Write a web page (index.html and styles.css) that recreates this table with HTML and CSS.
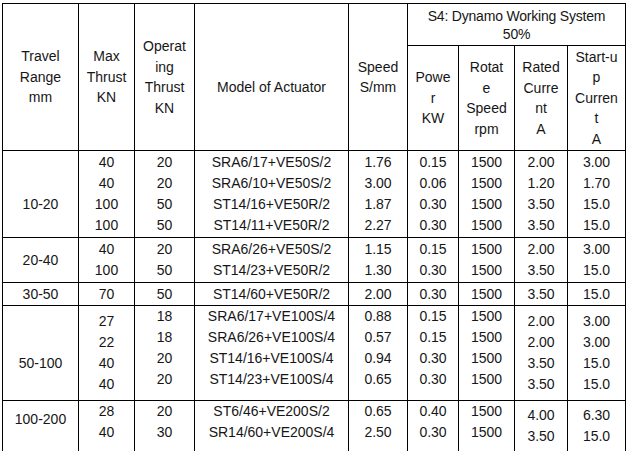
FILE: index.html
```html
<!DOCTYPE html>
<html>
<head>
<meta charset="utf-8">
<link rel="stylesheet" href="styles.css">
</head>
<body>
<table class="spec">
  <colgroup>
    <col class="c-travel"><col class="c-max"><col class="c-op"><col class="c-model"><col class="c-speed">
    <col class="c-power"><col class="c-rot"><col class="c-rated"><col class="c-start">
  </colgroup>
  <tr class="r-head1">
    <td rowspan="2" class="hd">Travel<br>Range<br>mm</td>
    <td rowspan="2" class="hd">Max<br>Thrust<br>KN</td>
    <td rowspan="2" class="hd">Operat<br>ing<br>Thrust<br>KN</td>
    <td rowspan="2" class="hd pre">Model of Actuator</td>
    <td rowspan="2" class="hd">Speed<br>S/mm</td>
    <td colspan="4" class="hd s4">S4: Dynamo Working System<br>50%</td>
  </tr>
  <tr class="r-head2">
    <td class="hd">Powe<br>r<br>KW</td>
    <td class="hd">Rotat<br>e<br>Speed<br>rpm</td>
    <td class="hd">Rated<br>Curre<br>nt<br>A</td>
    <td class="hd">Start-u<br>p<br>Curren<br>t<br>A</td>
  </tr>
  <tr class="r-g1">
    <td class="pre">10-20</td>
    <td>40<br>40<br>100<br>100</td>
    <td>20<br>20<br>50<br>50</td>
    <td>SRA6/17+VE50S/2<br>SRA6/10+VE50S/2<br>ST14/16+VE50R/2<br>ST14/11+VE50R/2</td>
    <td>1.76<br>3.00<br>1.87<br>2.27</td>
    <td>0.15<br>0.06<br>0.30<br>0.30</td>
    <td>1500<br>1500<br>1500<br>1500</td>
    <td>2.00<br>1.20<br>3.50<br>3.50</td>
    <td>3.00<br>1.70<br>15.0<br>15.0</td>
  </tr>
  <tr class="r-g2">
    <td>20-40</td>
    <td>40<br>100</td>
    <td>20<br>50</td>
    <td>SRA6/26+VE50S/2<br>ST14/23+VE50R/2</td>
    <td>1.15<br>1.30</td>
    <td>0.15<br>0.30</td>
    <td>1500<br>1500</td>
    <td>2.00<br>3.50</td>
    <td>3.00<br>15.0</td>
  </tr>
  <tr class="r-g3">
    <td>30-50</td>
    <td>70</td>
    <td>50</td>
    <td>ST14/60+VE50R/2</td>
    <td>2.00</td>
    <td>0.30</td>
    <td>1500</td>
    <td>3.50</td>
    <td>15.0</td>
  </tr>
  <tr class="r-g4">
    <td class="pre">50-100</td>
    <td>27<br>22<br>40<br>40</td>
    <td class="up5">18<br>18<br>20<br>20</td>
    <td class="up5">SRA6/17+VE100S/4<br>SRA6/26+VE100S/4<br>ST14/16+VE100S/4<br>ST14/23+VE100S/4</td>
    <td class="up5">0.88<br>0.57<br>0.94<br>0.65</td>
    <td class="up5">0.15<br>0.15<br>0.30<br>0.30</td>
    <td class="up5">1500<br>1500<br>1500<br>1500</td>
    <td>2.00<br>2.00<br>3.50<br>3.50</td>
    <td>3.00<br>3.00<br>15.0<br>15.0</td>
  </tr>
  <tr class="r-g5">
    <td class="up7">100-200</td>
    <td class="up4">28<br>40</td>
    <td class="up4">20<br>30</td>
    <td class="up4">ST6/46+VE200S/2<br>SR14/60+VE200S/4</td>
    <td class="up4">0.65<br>2.50</td>
    <td class="up4">0.40<br>0.30</td>
    <td class="up4">1500<br>1500</td>
    <td>4.00<br>3.50</td>
    <td>6.30<br>15.0</td>
  </tr>
</table>
</body>
</html>
```
FILE: styles.css
```css
html, body {
  margin: 0;
  background: #ffffff;
}
body {
  padding: 3px 0 0 2px;
  font-family: "Liberation Sans", Arial, sans-serif;
  font-size: 14px;
  color: #161616;
}
.spec {
  border-collapse: collapse;
  table-layout: fixed;
  width: 624px;
}
.spec td {
  border: 1px solid #000;
  padding: 0;
  text-align: center;
  vertical-align: middle;
  line-height: 21px;
  white-space: nowrap;
}
.c-travel { width: 76px; }
.c-max { width: 56px; }
.c-op { width: 60px; }
.c-model { width: 154px; }
.c-speed { width: 59px; }
.c-power { width: 51px; }
.c-rot { width: 56px; }
.c-rated { width: 53px; }
.c-start { width: 58px; }

.spec td.hd { line-height: 20.5px; }
.spec td.s4 { line-height: 18px; letter-spacing: -0.2px; }

.r-head1 { height: 42px; }
.r-head2 { height: 105px; }
.r-g1 { height: 87px; }
.r-g2 { height: 45px; }
.r-g3 { height: 23px; }
.r-g4 { height: 93px; }
.r-g5 { height: 49px; }

.spec td.pre { padding-top: 20px; }
.spec td.up5 { padding-bottom: 10px; }
.spec td.up4 { padding-bottom: 8px; }
.spec td.up7 { padding-bottom: 14px; }
```
